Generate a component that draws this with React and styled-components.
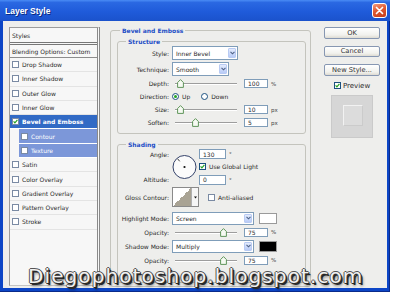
import React from 'react'
import styled, { createGlobalStyle } from 'styled-components'

const GlobalStyle = createGlobalStyle`
  html, body {
    margin: 0;
    padding: 0;
    background: #fff;
  }
  body {
    width: 400px;
    height: 301px;
    overflow: hidden;
  }
`

const Window = styled.div`
  position: relative;
  width: 390px;
  height: 292px;
  box-sizing: border-box;
  display: flex;
  flex-direction: column;
  background: #0c45c6;
  padding: 0 3px 4px 3px;
  box-shadow: inset 0 -1px 0 #0a2a8a, inset -1px 0 0 #0a2a8a;
`

const TitleBar = styled.div`
  height: 22px;
  margin: 0 -3px;
  padding: 0 3px 0 5px;
  display: flex;
  align-items: center;
  justify-content: space-between;
  background: linear-gradient(180deg, #4a8cf5 0%, #2a68e2 12%, #1f5bda 55%, #1a52cc 100%);
`

const Title = styled.span`
  font-family: "Liberation Sans", Arial, sans-serif;
  font-weight: bold;
  font-size: 8.5px;
  color: #fff;
  text-shadow: 1px 1px 0 #0b2a80;
`

const CloseButton = styled.div`
  width: 15px;
  height: 15px;
  box-sizing: border-box;
  border: 1px solid #fff;
  border-radius: 3px;
  background: linear-gradient(160deg, #f29a7c 0%, #e05a33 45%, #c53c19 100%);
  display: flex;
  align-items: center;
  justify-content: center;
`

const Body = styled.div`
  flex: 1;
  display: flex;
  align-items: flex-start;
  padding: 6px 7px 1px 6px;
  background: #eeeeec;
  font-family: "DejaVu Sans", Verdana, sans-serif;
  font-size: 6px;
  color: #2b2b2b;
`

/* left list of effects */
const StyleList = styled.div`
  width: 91px;
  height: 259px;
  flex: none;
  box-sizing: border-box;
  border-left: 1px solid #9c9c9c;
  border-top: 1px solid #9c9c9c;
  border-right: 3px double #8a8a8a;
  border-bottom: 1px solid #c4c4c4;
  background: #f7f7f7;
  display: flex;
  flex-direction: column;
`

const ListHeader = styled.div`
  height: ${p => p.$h}px;
  flex: none;
  display: flex;
  align-items: center;
  padding-left: 2px;
  border-bottom: ${p => p.$double ? '3px double #777' : '1px solid #8c8c8c'};
`

const ListItem = styled.div`
  height: 13.3px;
  flex: none;
  display: flex;
  align-items: center;
  gap: 3px;
  padding-left: 2px;
  margin-left: ${p => p.$sub ? '9px' : '0'};
  background: ${p => p.$selected ? '#316ac5' : p.$sub ? '#7c97d9' : 'transparent'};
  color: ${p => (p.$selected || p.$sub) ? '#fff' : '#2b2b2b'};
  font-weight: ${p => p.$selected ? 'bold' : 'normal'};
  border-bottom: 1px solid ${p => (p.$selected || p.$sub) ? '#fff' : '#e4e4e4'};
  white-space: nowrap;
`

const Box = styled.span`
  width: 7px;
  height: 7px;
  flex: none;
  box-sizing: border-box;
  border: 1px solid ${p => p.$dark ? '#1c5180' : '#7a8aa3'};
  background: #fff;
  display: flex;
  align-items: center;
  justify-content: center;
`

/* main group boxes */
const Group = styled.fieldset`
  margin: 0 0 0 10px;
  width: 201px;
  min-width: 0;
  box-sizing: border-box;
  padding: 3.5px 4px 3px 6px;
  border: 1px solid #c4c4bd;
  border-radius: 3px;
`

const SubGroup = styled.fieldset`
  margin: ${p => p.$mt || 0}px 0 0 0;
  min-width: 0;
  padding: 0.5px 0 ${p => p.$pb}px 0;
  border: 1px solid #c4c4bd;
  border-radius: 3px;
`

const Legend = styled.legend`
  margin-left: ${p => p.$ml}px;
  padding: 0 2px;
  font-weight: bold;
  font-size: 6px;
  line-height: 7px;
  color: #1e4fc6;
`

const Row = styled.div`
  height: ${p => p.$h}px;
  margin-top: ${p => p.$mt || 0}px;
  display: flex;
  align-items: center;
  white-space: nowrap;
`

const Label = styled.span`
  width: 51px;
  flex: none;
  margin-right: 3px;
  text-align: right;
`

const Select = styled.div`
  width: ${p => p.$w}px;
  height: ${p => p.$h}px;
  flex: none;
  box-sizing: border-box;
  border: 1px solid #7f9db9;
  background: #fff;
  display: flex;
  align-items: center;
  justify-content: space-between;
  padding: 0 1px 0 3px;
`

const DropArrow = styled.span`
  width: 8px;
  height: calc(100% - 2px);
  box-sizing: border-box;
  border: 1px solid #b9cbf3;
  border-radius: 1px;
  background: linear-gradient(180deg, #e3ebfd, #b8cbf7);
  display: flex;
  align-items: center;
  justify-content: center;
`

const NumField = styled.div`
  width: ${p => p.$w}px;
  height: ${p => p.$h}px;
  margin-left: ${p => p.$ml}px;
  flex: none;
  box-sizing: border-box;
  border: 1px solid #7f9db9;
  background: #fff;
  padding-left: 3px;
  display: flex;
  align-items: center;
`

const Unit = styled.span`
  margin-left: 3px;
  font-size: 5.5px;
  color: #444;
`

const Slider = styled.div`
  position: relative;
  width: 62px;
  height: 9px;
  margin-left: 3px;
  flex: none;

  &::before {
    content: '';
    position: absolute;
    left: 0;
    right: 0;
    top: 4px;
    height: 1px;
    background: #9d9d9d;
    box-shadow: 0 1px 0 #fff;
  }
`

const Thumb = styled.svg`
  position: absolute;
  top: 0;
  left: ${p => p.$at}px;
`

const Radio = styled.span`
  width: 7px;
  height: 7px;
  flex: none;
  box-sizing: border-box;
  border: 1px solid #1c5180;
  border-radius: 50%;
  background: #fff;
  display: flex;
  align-items: center;
  justify-content: center;
  margin-left: ${p => p.$ml || 0}px;

  &::after {
    content: '';
    width: 3px;
    height: 3px;
    border-radius: 50%;
    background: ${p => p.$on ? '#22a322' : 'transparent'};
  }
`

const Text = styled.span`
  margin-left: ${p => p.$ml || 0}px;
`

const AngleGrid = styled.div`
  height: 38px;
  display: grid;
  grid-template-columns: 54px 27px 1fr;
  grid-template-rows: repeat(3, 1fr);
  align-items: center;
  white-space: nowrap;
`

const GridLabel = styled.span`
  grid-column: 1;
  grid-row: ${p => p.$row};
  padding-right: 3px;
  text-align: right;
`

const Dial = styled.svg`
  grid-column: 2;
  grid-row: 1 / 4;
`

const Cell = styled.div`
  grid-column: 3;
  grid-row: ${p => p.$row};
  display: flex;
  align-items: center;
`

const ContourSwatch = styled.div`
  width: 27px;
  height: 20px;
  flex: none;
  box-sizing: border-box;
  border: 1px solid #8a8a8a;
  display: flex;
`

const ContourCurve = styled.div`
  flex: 1;
  background: linear-gradient(to bottom right, #fff 50%, #a9a394 50%);
`

const ContourDrop = styled.div`
  width: 6px;
  border-left: 1px solid #b0b0b0;
  background: #f6f6f6;
  display: flex;
  align-items: center;
  justify-content: center;
`

const ColorSwatch = styled.div`
  width: 18px;
  height: 11px;
  margin-left: 5px;
  box-sizing: border-box;
  border: 1px solid #9a9a9a;
  background: ${p => p.$color};
`

/* right column */
const Side = styled.div`
  margin-left: 13px;
  width: 56px;
  flex: none;
  display: flex;
  flex-direction: column;
  align-items: center;
`

const Button = styled.div`
  width: 56px;
  height: 11.5px;
  box-sizing: border-box;
  border: 1px solid #8797b2;
  border-radius: 2px;
  background: linear-gradient(180deg, #ffffff, #f1f1ed 70%, #dedbd2);
  display: flex;
  align-items: center;
  justify-content: center;
  font-size: 6.7px;
  color: #333;

  & + & {
    margin-top: 7px;
  }
`

const PreviewToggle = styled.div`
  margin-top: 6px;
  display: flex;
  align-items: center;
  gap: 2px;
  font-size: 7px;
`

const PreviewBox = styled.div`
  margin-top: 5px;
  width: 42px;
  height: 43px;
  box-sizing: border-box;
  border: 1px solid #cacaca;
  background: #d6d6d6;
  display: flex;
  align-items: center;
  justify-content: center;
`

const PreviewSquare = styled.div`
  width: 18px;
  height: 19px;
  margin: 0 0 2px 2px;
  border-top: 1px solid #f2f2f2;
  border-left: 1px solid #f2f2f2;
  border-bottom: 1px solid #cbcbcb;
  border-right: 1px solid #cbcbcb;
  background: #dcdcdc;
`

const Watermark = styled.div`
  position: absolute;
  left: 28px;
  top: 265.5px;
  font-family: "DejaVu Sans", Verdana, sans-serif;
  font-size: 20px;
  line-height: 20px;
  letter-spacing: 1.1px;
  color: #f2f2f2;
  white-space: nowrap;
  text-shadow:
    1px 0 0 #3a3a3a, -1px 0 0 #555, 0 1px 0 #2a2a2a, 0 -1px 0 #555,
    1px 1px 0 #1e1e1e, 2px 2px 0 #2a2a2a, 2px 3px 3px rgba(0, 0, 0, 0.55);
`

const Check = () => (
  <svg width="5" height="5" viewBox="0 0 5 5">
    <path d="M0.6 2.4 L1.9 3.8 L4.4 0.9" fill="none" stroke="#21a121" strokeWidth="1.2" />
  </svg>
)

const CheckBox = ({ checked, dark }) => (
  <Box $dark={dark}>{checked && <Check />}</Box>
)

const Chevron = () => (
  <svg width="5" height="4" viewBox="0 0 5 4">
    <path d="M0.5 0.8 L2.5 2.8 L4.5 0.8" fill="none" stroke="#4d6185" strokeWidth="1.1" />
  </svg>
)

const Combo = ({ w, h, value }) => (
  <Select $w={w} $h={h}>
    <span>{value}</span>
    <DropArrow><Chevron /></DropArrow>
  </Select>
)

const SliderThumb = ({ at }) => (
  <Thumb $at={at} width="7" height="9" viewBox="0 0 7 9">
    <polygon points="3.5,0.6 6.4,3.5 6.4,8.4 0.6,8.4 0.6,3.5" fill="#f6faf2" stroke="#4f8a4a" strokeWidth="0.9" />
  </Thumb>
)

const SliderRow = ({ label, at, value, unit, h, mt }) => (
  <Row $h={h} $mt={mt}>
    <Label>{label}</Label>
    <Slider><SliderThumb at={at} /></Slider>
    <NumField $w={24} $h={9} $ml={7}>{value}</NumField>
    <Unit>{unit}</Unit>
  </Row>
)

const effects = [
  { name: 'Drop Shadow' },
  { name: 'Inner Shadow' },
  { name: 'Outer Glow' },
  { name: 'Inner Glow' },
  { name: 'Bevel and Emboss', selected: true, checked: true },
  { name: 'Contour', sub: true },
  { name: 'Texture', sub: true },
  { name: 'Satin' },
  { name: 'Color Overlay' },
  { name: 'Gradient Overlay' },
  { name: 'Pattern Overlay' },
  { name: 'Stroke' },
]

export default function App() {
  return (
    <>
      <GlobalStyle />
      <Window>
        <TitleBar>
          <Title>Layer Style</Title>
          <CloseButton>
            <svg width="9" height="9" viewBox="0 0 9 9">
              <path d="M1.5 1.5 L7.5 7.5 M7.5 1.5 L1.5 7.5" stroke="#fff" strokeWidth="1.7" strokeLinecap="round" />
            </svg>
          </CloseButton>
        </TitleBar>

        <Body>
          <StyleList>
            <ListHeader $h={14} $double>Styles</ListHeader>
            <ListHeader $h={12}>Blending Options: Custom</ListHeader>
            {effects.map(e => (
              <ListItem key={e.name} $selected={e.selected} $sub={e.sub}>
                <CheckBox checked={e.checked} />
                {e.name}
              </ListItem>
            ))}
          </StyleList>

          <Group>
            <Legend $ml={3}>Bevel and Emboss</Legend>

            <SubGroup $pb={3.5}>
              <Legend $ml={8}>Structure</Legend>
              <Row $h={16}>
                <Label>Style:</Label>
                <Combo w={66} h={14} value="Inner Bevel" />
              </Row>
              <Row $h={16}>
                <Label>Technique:</Label>
                <Combo w={57} h={14} value="Smooth" />
              </Row>
              <SliderRow label="Depth:" at={1.5} value="100" unit="%" h={13} />
              <Row $h={13}>
                <Label>Direction:</Label>
                <Radio $on />
                <Text $ml={3}>Up</Text>
                <Radio $ml={11} />
                <Text $ml={3}>Down</Text>
              </Row>
              <SliderRow label="Size:" at={1.5} value="10" unit="px" h={13} />
              <SliderRow label="Soften:" at={16.5} value="5" unit="px" h={13} />
            </SubGroup>

            <SubGroup $mt={7} $pb={15}>
              <Legend $ml={8}>Shading</Legend>
              <AngleGrid>
                <GridLabel $row={1}>Angle:</GridLabel>
                <GridLabel $row={3}>Altitude:</GridLabel>
                <Dial width="26" height="26" viewBox="0 0 26 26">
                  <circle cx="12.5" cy="13" r="11.5" fill="#fbfbfb" stroke="#34426a" strokeWidth="1" />
                  <line x1="7.7" y1="7.3" x2="5.6" y2="4.8" stroke="#222" strokeWidth="0.9" />
                  <circle cx="12.5" cy="13" r="1.1" fill="#111" />
                </Dial>
                <Cell $row={1}>
                  <NumField $w={27} $h={10} $ml={0}>130</NumField>
                  <Unit>°</Unit>
                </Cell>
                <Cell $row={2}>
                  <CheckBox checked dark />
                  <Text $ml={3}>Use Global Light</Text>
                </Cell>
                <Cell $row={3}>
                  <NumField $w={27} $h={10} $ml={0}>0</NumField>
                  <Unit>°</Unit>
                </Cell>
              </AngleGrid>

              <Row $h={22}>
                <Label>Gloss Contour:</Label>
                <ContourSwatch>
                  <ContourCurve />
                  <ContourDrop>
                    <svg width="3" height="3" viewBox="0 0 3 3">
                      <path d="M0 0.5 H3 L1.5 2.5 Z" fill="#111" />
                    </svg>
                  </ContourDrop>
                </ContourSwatch>
                <Text $ml={9}><CheckBox /></Text>
                <Text $ml={3}>Anti-aliased</Text>
              </Row>

              <Row $h={14} $mt={3}>
                <Label>Highlight Mode:</Label>
                <Combo w={82} h={13} value="Screen" />
                <ColorSwatch $color="#fff" />
              </Row>
              <SliderRow label="Opacity:" at={44.5} value="75" unit="%" h={14} />
              <Row $h={14}>
                <Label>Shadow Mode:</Label>
                <Combo w={82} h={13} value="Multiply" />
                <ColorSwatch $color="#000" />
              </Row>
              <SliderRow label="Opacity:" at={44.5} value="75" unit="%" h={14} />
            </SubGroup>
          </Group>

          <Side>
            <Button>OK</Button>
            <Button>Cancel</Button>
            <Button>New Style...</Button>
            <PreviewToggle>
              <CheckBox checked dark />
              Preview
            </PreviewToggle>
            <PreviewBox>
              <PreviewSquare />
            </PreviewBox>
          </Side>
        </Body>

        <Watermark>Diegophotoshop.blogspot.com</Watermark>
      </Window>
    </>
  )
}
